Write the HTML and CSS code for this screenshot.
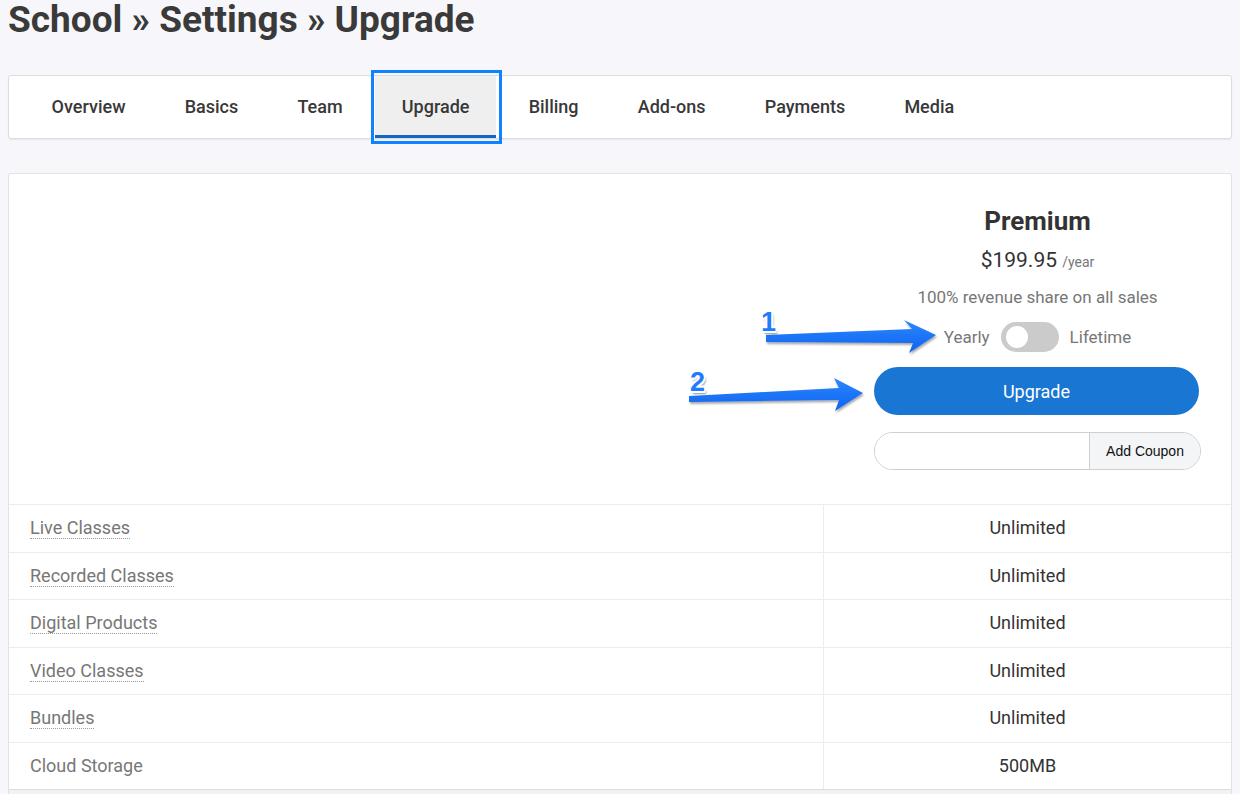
FILE: index.html
```html
<!DOCTYPE html>
<html>
<head>
  <title>School Settings - Upgrade</title>
  <link rel="stylesheet" href="styles.css">
</head>
<body>
  <div class="page">
    <h1 class="page-title">School &raquo; Settings &raquo; Upgrade</h1>

    <nav class="tabs">
      <a class="tab" href="#">Overview</a>
      <a class="tab" href="#">Basics</a>
      <a class="tab" href="#">Team</a>
      <a class="tab active" href="#">Upgrade</a>
      <a class="tab" href="#">Billing</a>
      <a class="tab" href="#">Add-ons</a>
      <a class="tab" href="#">Payments</a>
      <a class="tab" href="#">Media</a>
    </nav>

    <div class="card">
      <div class="plan-top">
        <div class="plan">
          <div class="plan-name">Premium</div>
          <div class="plan-price">$199.95 <span class="per">/year</span></div>
          <div class="plan-note">100% revenue share on all sales</div>
          <div class="period">
            <span>Yearly</span>
            <span class="switch"></span>
            <span>Lifetime</span>
          </div>
          <button class="upgrade-btn">Upgrade</button>
          <div class="coupon">
            <input type="text">
            <button class="coupon-btn">Add Coupon</button>
          </div>
        </div>
      </div>

      <table class="features">
        <tr>
          <td class="feature"><span class="hint">Live Classes</span></td>
          <td class="value">Unlimited</td>
        </tr>
        <tr>
          <td class="feature"><span class="hint">Recorded Classes</span></td>
          <td class="value">Unlimited</td>
        </tr>
        <tr>
          <td class="feature"><span class="hint">Digital Products</span></td>
          <td class="value">Unlimited</td>
        </tr>
        <tr>
          <td class="feature"><span class="hint">Video Classes</span></td>
          <td class="value">Unlimited</td>
        </tr>
        <tr>
          <td class="feature"><span class="hint">Bundles</span></td>
          <td class="value">Unlimited</td>
        </tr>
        <tr>
          <td class="feature">Cloud Storage</td>
          <td class="value">500MB</td>
        </tr>
      </table>
      <div class="card-foot"></div>
    </div>
  </div>

  <!-- screenshot annotations -->
  <div class="annotations">
    <svg class="arrows" width="1240" height="794" viewBox="0 0 1240 794">
      <defs>
        <linearGradient id="arrowFill" x1="0" y1="0" x2="0" y2="1">
          <stop offset="0" stop-color="#2c88ff"/>
          <stop offset="1" stop-color="#0f62ee"/>
        </linearGradient>
        <filter id="arrowShadow" x="-10%" y="-50%" width="120%" height="200%">
          <feDropShadow dx="1" dy="2" stdDeviation="1.2" flood-color="#000" flood-opacity="0.35"/>
        </filter>
      </defs>
      <polygon fill="url(#arrowFill)" filter="url(#arrowShadow)"
        points="766,335 912,329 904,320 936,335 909,353 913,343 766,342"/>
      <polygon fill="url(#arrowFill)" filter="url(#arrowShadow)"
        points="689,396 839,388 834,378 863,393 835,411 839,400 689,402"/>
    </svg>
    <div class="step step-1">1</div>
    <div class="step step-2">2</div>
  </div>
</body>
</html>
```

FILE: styles.css
```css
body {
  margin: 0;
  padding: 0;
  background-color: #f7f7fb;
  font-family: Roboto, "Noto Sans", Arial, sans-serif;
  color: #333;
}

.page {
  padding: 0 8px;
}

.page-title {
  margin: 0;
  font-size: 37px;
  line-height: 40px;
  font-weight: 700;
  color: #3a3a3a;
}

/* tabs */

.tabs {
  display: flex;
  height: 62px;
  margin-top: 35px;
  padding: 0 13px;
  background-color: #fff;
  border: 1px solid #dcdcdc;
  border-radius: 3px;
  box-shadow: 0 1px 2px rgba(0, 0, 0, 0.06);
}

.tab {
  position: relative;
  display: flex;
  align-items: center;
  margin: 0 2.6px;
  padding: 0 27px 2px;
  font-size: 18px;
  font-weight: 500;
  color: #383838;
  text-decoration: none;
}

.tab.active {
  background-color: #efefef;
  box-shadow: inset 0 -3px 0 #1565c0;
}

.tab.active::after {
  content: "";
  position: absolute;
  top: -6px;
  bottom: -6px;
  left: -4px;
  right: -6px;
  border: 3px solid #0d83ff;
}

/* card */

.card {
  margin-top: 34px;
  background-color: #fff;
  border: 1px solid #e2e2e2;
  border-bottom: none;
  border-radius: 3px 3px 0 0;
}

.plan-top {
  display: flex;
  justify-content: flex-end;
  padding: 32px 30px 34px 0;
}

.plan {
  width: 327px;
  text-align: center;
}

.plan-name {
  font-size: 26px;
  line-height: 30px;
  font-weight: 700;
  color: #333;
}

.plan-price {
  margin-top: 10px;
  font-size: 21px;
  line-height: 28px;
  color: #333;
}

.plan-price .per {
  font-size: 14px;
  color: #777;
}

.plan-note {
  margin-top: 9px;
  font-size: 17px;
  line-height: 24px;
  color: #777;
}

.period {
  display: flex;
  justify-content: center;
  align-items: center;
  gap: 11px;
  height: 30px;
  margin-top: 13px;
  font-size: 17px;
  color: #777;
}

.switch {
  position: relative;
  width: 58px;
  height: 30px;
  border-radius: 15px;
  background-color: #cbcbcb;
}

.switch::before {
  content: "";
  position: absolute;
  top: 4px;
  left: 5px;
  width: 22px;
  height: 22px;
  border-radius: 50%;
  background-color: #fff;
}

.upgrade-btn {
  display: block;
  width: 325px;
  height: 48px;
  margin-top: 15px;
  padding: 0;
  font-family: Roboto, Arial, sans-serif;
  font-size: 18px;
  color: #fff;
  background-color: #1976d2;
  border: none;
  border-radius: 24px;
  cursor: pointer;
}

.coupon {
  display: flex;
  height: 36px;
  margin-top: 17px;
  border: 1px solid #cfcfcf;
  border-radius: 19px;
  overflow: hidden;
}

.coupon input {
  flex: 1;
  min-width: 0;
  border: none;
  padding: 0 14px;
  background-color: #fff;
}

.coupon-btn {
  width: 111px;
  padding: 0;
  font-family: "Liberation Sans", Arial, sans-serif;
  font-size: 14px;
  color: #111;
  background-color: #f4f5f7;
  border: none;
  border-left: 1px solid #cfcfcf;
}

/* features table */

.features {
  width: 100%;
  border-collapse: collapse;
}

.features tr {
  border-top: 1px solid #ececec;
}

.features td {
  padding: 12px 21px;
  font-size: 18px;
  line-height: 22.5px;
}

.feature {
  width: 772px;
  color: #777;
  border-right: 1px solid #ececec;
}

.hint {
  border-bottom: 1px dotted #9a9a9a;
}

.value {
  text-align: center;
  color: #333;
}

.card-foot {
  height: 30px;
  background-color: #f2f2f2;
  border-top: 1px solid #dcdcdc;
}

/* annotations drawn over the screenshot */

.annotations {
  position: absolute;
  top: 0;
  left: 0;
  width: 1240px;
  height: 794px;
  pointer-events: none;
}

.arrows {
  display: block;
}

.step {
  position: absolute;
  font-family: "Liberation Sans", Arial, sans-serif;
  font-size: 27px;
  line-height: 26px;
  font-weight: 700;
  color: #1f7bff;
  text-shadow:
    -1.5px -1.5px 0 #fff, 1.5px -1.5px 0 #fff,
    -1.5px 1.5px 0 #fff, 1.5px 1.5px 0 #fff,
    0 -2px 0 #fff, 0 2px 0 #fff, -2px 0 0 #fff, 2px 0 0 #fff,
    2px 3px 2px rgba(0, 0, 0, 0.45);
}

.step-1 {
  top: 309px;
  left: 761px;
}

.step-2 {
  top: 369px;
  left: 690px;
}
```
